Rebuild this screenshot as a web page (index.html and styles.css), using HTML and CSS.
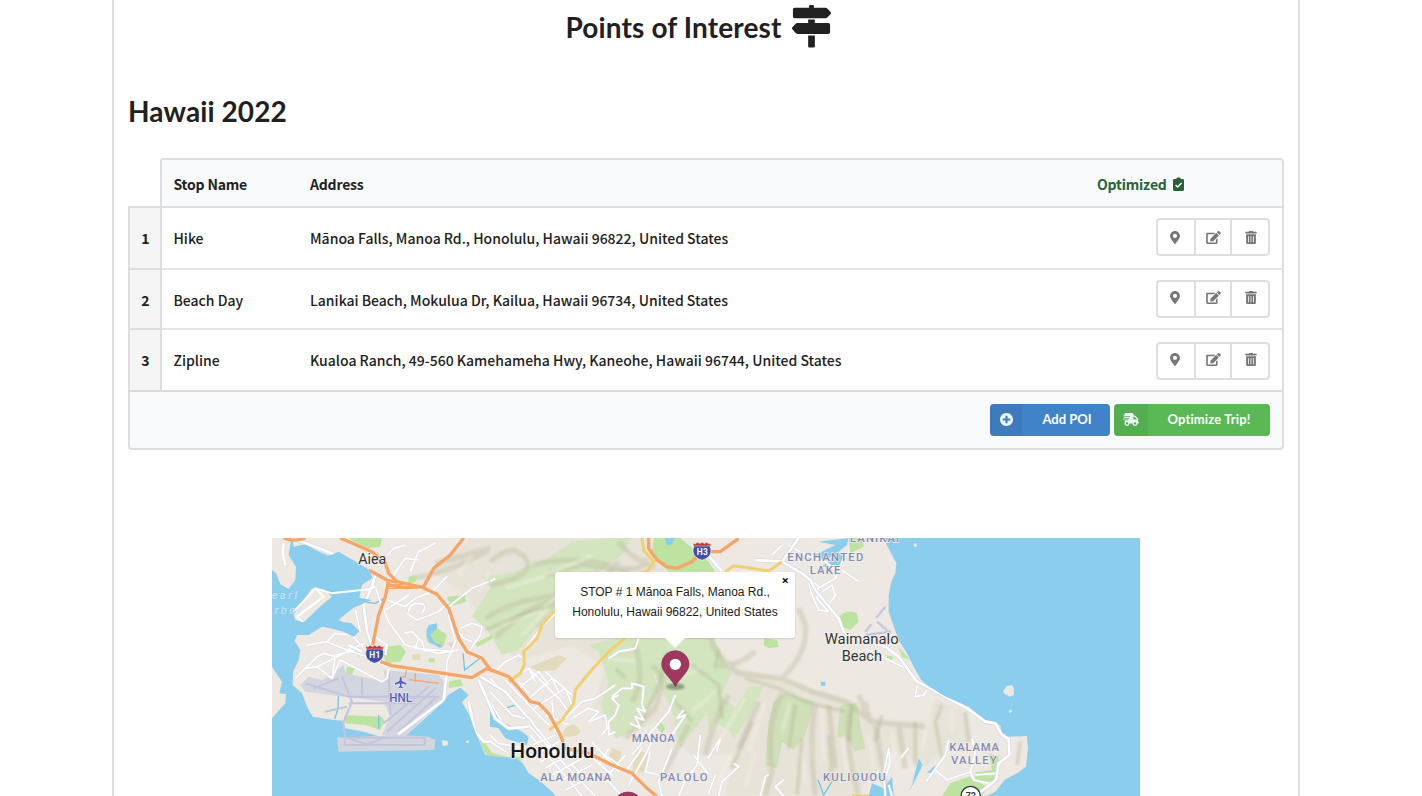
FILE: index.html
```
<!DOCTYPE html>
<html lang="en">
<head>
<meta charset="utf-8">
<title>Points of Interest</title>
<link rel="stylesheet" href="styles.css">
</head>
<body>
<svg class="defs" width="0" height="0" aria-hidden="true">
  <symbol id="pin" viewBox="0 0 384 512"><path d="M172.268 501.67C26.97 291.031 0 269.413 0 192 0 85.961 85.961 0 192 0s192 85.961 192 192c0 77.413-26.97 99.031-172.268 309.67-9.535 13.774-29.93 13.773-39.464 0zM192 272c44.183 0 80-35.817 80-80s-35.817-80-80-80-80 35.817-80 80 35.817 80 80 80z"/></symbol>
  <symbol id="edit" viewBox="0 0 576 512"><path d="M402.6 83.2l90.2 90.2c3.8 3.8 3.8 10 0 13.8L274.4 405.6l-92.8 10.3c-12.4 1.4-22.9-9.1-21.5-21.5l10.3-92.8L388.8 83.2c3.8-3.8 10-3.8 13.8 0zm162-22.9l-48.8-48.8c-15.2-15.2-39.9-15.2-55.2 0l-35.4 35.4c-3.8 3.8-3.8 10 0 13.8l90.2 90.2c3.8 3.8 10 3.8 13.8 0l35.4-35.4c15.2-15.3 15.2-40 0-55.2zM384 346.2V448H64V128h229.8c3.2 0 6.2-1.3 8.5-3.5l40-40c7.6-7.6 2.2-20.5-8.5-20.5H48C21.5 64 0 85.5 0 112v352c0 26.5 21.5 48 48 48h352c26.5 0 48-21.5 48-48V306.2c0-10.7-12.9-16-20.5-8.5l-40 40c-2.2 2.3-3.5 5.3-3.5 8.5z"/></symbol>
  <symbol id="trash" viewBox="0 0 448 512"><path d="M32 464a48 48 0 0 0 48 48h288a48 48 0 0 0 48-48V128H32zm272-256a16 16 0 0 1 32 0v224a16 16 0 0 1-32 0zm-96 0a16 16 0 0 1 32 0v224a16 16 0 0 1-32 0zm-96 0a16 16 0 0 1 32 0v224a16 16 0 0 1-32 0zM432 32H312l-9.4-18.7A24 24 0 0 0 281.1 0H166.8a23.72 23.72 0 0 0-21.4 13.3L136 32H16A16 16 0 0 0 0 48v32a16 16 0 0 0 16 16h416a16 16 0 0 0 16-16V48a16 16 0 0 0-16-16z"/></symbol>
</svg>
<main class="panel">
  <h1 class="title"><span>Points of Interest</span>
    <svg class="title-icon" viewBox="0 0 512 512" preserveAspectRatio="none"><path d="M507.31 84.69L464 41.37c-6-6-14.14-9.37-22.63-9.37H288V16c0-8.84-7.16-16-16-16h-32c-8.84 0-16 7.16-16 16v16H36c-13.25 0-24 10.75-24 24v80c0 13.25 10.75 24 24 24h405.37c8.49 0 16.62-3.37 22.63-9.37l43.31-43.31c6.25-6.26 6.25-16.38 0-22.63zM212 496c0 8.84 7.16 16 16 16h56c8.84 0 16-7.16 16-16V368h-88v128zm264-280H300v-40h-88v40H70.63c-8.49 0-16.62 3.37-22.63 9.37L4.69 268.69c-6.25 6.25-6.25 16.38 0 22.63L48 338.63c6 6 14.14 9.37 22.63 9.37H476c13.25 0 24-10.75 24-24v-84c0-13.25-10.75-24-24-24z"/></svg>
  </h1>
  <h2 class="trip">Hawaii 2022</h2>
  <table class="stops">
    <colgroup><col class="c-num"><col class="c-name"><col><col class="c-act"></colgroup>
    <thead>
      <tr><th class="corner"></th><th>Stop Name</th><th>Address</th>
        <th class="optimized"><span class="opt">Optimized <svg class="clip" viewBox="0 0 12 15"><path d="M1.5 2H3.7V1.2Q3.7.8 4.2.8H5Q6-.4 7 .8h.8q.5 0 .5.4V2h2.2Q12 2 12 3.3v10Q12 15 10.6 15H1.4Q0 15 0 13.4v-10Q0 2 1.5 2z"/><path class="tick" d="M2.8 8.5l2.3 2.3 4.2-4.3"/></svg></span></th></tr>
    </thead>
    <tbody>
      <tr class="tall"><th class="num">1</th><td>Hike</td><td>Mānoa Falls, Manoa Rd., Honolulu, Hawaii 96822, United States</td>
        <td class="act"><div class="group"><button><svg class="i-pin"><use href="#pin"/></svg></button><button><svg class="i-edit"><use href="#edit"/></svg></button><button><svg class="i-trash"><use href="#trash"/></svg></button></div></td></tr>
      <tr class="short"><th class="num">2</th><td>Beach Day</td><td>Lanikai Beach, Mokulua Dr, Kailua, Hawaii 96734, United States</td>
        <td class="act"><div class="group raised"><button><svg class="i-pin"><use href="#pin"/></svg></button><button><svg class="i-edit"><use href="#edit"/></svg></button><button><svg class="i-trash"><use href="#trash"/></svg></button></div></td></tr>
      <tr class="tall last"><th class="num">3</th><td>Zipline</td><td>Kualoa Ranch, 49-560 Kamehameha Hwy, Kaneohe, Hawaii 96744, United States</td>
        <td class="act"><div class="group raised"><button><svg class="i-pin"><use href="#pin"/></svg></button><button><svg class="i-edit"><use href="#edit"/></svg></button><button><svg class="i-trash"><use href="#trash"/></svg></button></div></td></tr>
    </tbody>
    <tfoot>
      <tr><td colspan="4"><div class="actions">
        <button class="btn add"><span class="side"><svg width="13" height="13" viewBox="8 8 496 496"><path d="M256 8C119 8 8 119 8 256s111 248 248 248 248-111 248-248S393 8 256 8zm144 276c0 6.6-5.4 12-12 12h-92v92c0 6.6-5.4 12-12 12h-56c-6.6 0-12-5.4-12-12v-92h-92c-6.6 0-12-5.4-12-12v-56c0-6.6 5.4-12 12-12h92v-92c0-6.6 5.4-12 12-12h56c6.6 0 12 5.4 12 12v92h92c6.6 0 12 5.4 12 12v56z"/></svg></span><span class="lbl">Add POI</span></button>
        <button class="btn go"><span class="side"><svg width="16" height="13" viewBox="0 0 640 512"><path d="M624 352h-16V243.9c0-12.7-5.1-24.9-14.1-33.9L494 110.1c-9-9-21.2-14.1-33.9-14.1H416V48c0-26.5-21.5-48-48-48H112C85.5 0 64 21.5 64 48v48H8c-4.4 0-8 3.6-8 8v16c0 4.4 3.6 8 8 8h272c4.4 0 8 3.6 8 8v16c0 4.4-3.6 8-8 8H40c-4.4 0-8 3.6-8 8v16c0 4.4 3.6 8 8 8h208c4.4 0 8 3.6 8 8v16c0 4.4-3.6 8-8 8H8c-4.4 0-8 3.6-8 8v16c0 4.4 3.6 8 8 8h208c4.4 0 8 3.6 8 8v16c0 4.4-3.6 8-8 8H64v128c0 53 43 96 96 96s96-43 96-96h128c0 53 43 96 96 96s96-43 96-96h48c8.8 0 16-7.2 16-16v-32c0-8.8-7.2-16-16-16zM160 464c-26.5 0-48-21.5-48-48s21.5-48 48-48 48 21.5 48 48-21.5 48-48 48zm320 0c-26.5 0-48-21.5-48-48s21.5-48 48-48 48 21.5 48 48-21.5 48-48 48zm80-208H416V144h44.1l99.9 99.9V256z"/></svg></span><span class="lbl">Optimize Trip!</span></button>
      </div></td></tr>
    </tfoot>
  </table>

  <section class="map">
    <svg class="tiles" viewBox="0 9 2604 774">
      <defs>
        <clipPath id="island"><path d="M60 0L65 35 100 28 130 45 170 62 200 50 290 103 302 128 270 150 262 188 300 195 245 218 205 250 235 262 262 288 245 306 215 290 175 280 150 275 110 300 75 300 68 318 85 345 80 375 63 410 62 450 90 475 105 515 122 545 185 555 212 557 220 580 275 590 325 605 400 603 515 500 528 480 565 458 590 480 570 502 592 540 610 590 640 660 684 665 730 668 752 685 770 715 800 735 845 775 860 800H2112L2170 770 2200 733 2240 712 2262 695 2268 640 2265 603 2207 605 2188 590 2185 572 2170 560 2140 555 2090 515 2020 485 1968 453 1948 435 1925 395 1905 355 1880 315 1862 265 1850 230 1850 180 1858 140 1870 115 1873 85 1855 50 1830 0Z"/></clipPath>
        <filter id="soft" x="-5%" y="-5%" width="110%" height="110%"><feGaussianBlur stdDeviation="3.5"/></filter>
        <g id="streets">
          <path d="M105 330L165 320 190 295 240 300 275 340M165 320L225 345 280 325M70 430L135 365 155 355 190 365 180 430 135 395 100 400M135 395L225 350M190 360L250 345M180 430L205 375 330 440 345 430 350 400M225 345L285 365 345 395M310 155L325 200 350 260 400 330 500 355 560 345M345 195L400 215 430 190 480 170 525 125M340 225L410 180M350 140L400 70 440 75M415 110L440 50 490 25M405 235L435 255 500 230 530 200M410 230Q410 205 440 205T450 235M395 295L420 290 440 310 430 340 545 350M430 300L450 320 460 350M520 500L525 380 550 320 530 240M565 280L600 265 630 275 625 300 590 350M250 225L265 290M300 300L345 330 340 360M560 290L575 310 600 320M345 60L365 40 400 30M530 215L600 160 650 140"/>
          <path d="M654 430L760 530 800 590M654 470L720 540 760 550M654 500L690 560M710 440L770 400 790 440M735 465L800 410 830 450M760 500L840 430 860 470M785 520L880 460 900 510M700 435L770 510 830 570M770 400L860 490 890 530M820 410L900 480M740 440L770 475M760 340L810 275 850 235M654 140L670 130M820 540L890 570M840 500L850 590M670 410L700 380 740 360 760 375"/>
          <path d="M770 570L880 690 970 783M775 600L860 700 930 783M795 580L850 650 910 670M780 630L850 600M790 660L870 615M805 680L880 640M820 700L920 640M840 720L940 665M860 740L960 690M880 765L990 710M900 690L930 720 1010 740 1050 783M940 650L1020 720M960 620L1040 710M1000 660L1080 720M1010 640L980 690M1060 660L1000 730M1110 640L1060 710M1120 660L1070 750M1140 620L1110 680M654 600L680 625 760 640M654 620L700 650"/>
          <path d="M880 550L930 500 970 490 1030 450M900 550L950 520 980 530 950 560 1000 540 1005 580 990 600M1040 480L1020 490 1040 510 1030 540 1010 560 1010 600 1030 590M1020 485L1050 460 1080 460 1080 445 1115 455 1110 510 1120 530 1095 520 1115 555 1090 545 1105 580 1075 565M1210 480L1190 530 1130 600 1080 660M1235 525L1215 550 1240 540 1200 600 1175 610M1135 650L1120 710 1160 720M1200 640L1160 740 1170 783M1285 600L1275 690 1240 735 1220 783M1308 670L1345 610 1335 650M1265 660L1310 720M1290 720L1308 730M1340 783L1350 740 1400 695 1385 685M1465 783L1480 725 1490 718M1535 783L1510 755 1535 735M1010 370L1040 350 1090 340 1100 310"/>
          <path d="M1610 130L1640 155 1635 190 1670 230 1640 225 1620 180 1610 145M1650 170L1680 150 1690 180 1670 210M1550 30L1600 60 1660 80 1700 115M1630 165L1690 130 1720 60M1710 105L1760 140M1530 30L1500 60M1780 340L1900 400 1890 370M1780 360L1760 345M1885 670L1910 640"/>
          <path d="M1962 740L2020 660 2030 615M1990 705L2025 735 2095 710 2110 655 2100 610M2095 710L2105 735 2150 745M1840 783L1835 720 1850 640 1855 680 1838 735M1935 455L1930 485 1955 480 1965 465M2110 720L2170 715M1330 720L1310 775M1860 783L1850 750"/>
        </g>
        <path id="highways" d="M60 9L155 45 290 105M310 120L300 155 275 210 285 290 300 330M180 175L290 163 310 155M230 330L270 350M378 598L515 495 525 410M1580 9L1555 45 1530 80 1590 115 1615 135 1630 165 1700 250 1715 290M1530 80L1450 75M1308 60L1350 110M620 435L670 550 710 580 770 575M625 425L700 470 770 550M1715 290L1745 310 1840 335 1880 365 1935 440 1965 455 2085 520 2140 560 2170 565 2190 600 2210 612 2212 660 2180 685 2172 735 2110 783M590 500L610 590 635 620 660 620"/>
      </defs>
      <rect class="sea" y="0" width="2604" height="800"/>
      <path class="land" d="M0 0H60L50 60 72 95 70 135 50 162 25 148 12 115 0 105ZM0 395L30 440 22 475 42 478 40 505 0 550ZM65 240L120 160 155 162 180 185 150 210 95 262 70 255ZM200 255L235 232 250 240 245 265 215 262ZM510 615L527 618 528 630 512 634ZM582 618L590 616V624H583Z"/>
      <g clip-path="url(#island)">
        <rect class="land" y="0" width="2604" height="800"/>
        <path class="upland" filter="url(#soft)" d="M590 9H1130L1190 110 1300 120 1330 330 1400 400 1560 440 1750 500 1830 560 1960 560 1990 490 2090 540 2100 620 2020 640 1960 700 1870 640 1750 783H1360L1380 660 1260 660 1150 560 1040 610 960 520 1000 400 900 330 740 380 660 300 590 190 480 110Z"/>
        <!-- forest reserves -->
        <g class="forest">
          <path d="M820 75L900 20 1010 9H1080L1050 60 970 120 860 195 800 270 740 345 690 360 655 300 640 280 600 245 655 160 630 125 715 115 760 95Z"/>
          <path d="M950 330L1040 310H1180L1320 300 1375 410 1350 480 1390 600 1300 540 1225 640 1200 530 1140 400 1160 470 1080 590 1030 610 985 510 1010 440 980 350Z"/>
          <path d="M1308 385L1380 415 1345 480 1390 520 1430 455 1475 455 1420 560 1385 610 1340 530 1308 600Z"/>
          <path class="deep" d="M1505 500L1540 475 1628 500 1600 600 1565 645 1530 620 1515 700 1480 690 1490 560ZM1705 510L1755 505 1765 570 1780 640 1750 650 1720 600 1695 610Z"/>
        </g>
        <!-- ridges -->
        <g class="shade" filter="url(#soft)">
          <path d="M655 80Q720 20 760 70T655 150M780 90Q900 60 1010 90T1120 70M640 250Q720 200 800 190T980 110M670 310Q760 210 860 195T1040 80M800 280Q860 200 930 170L1000 120M1040 20Q1080 75 1150 95M420 130Q540 110 650 45M490 85L655 40"/>
          <path d="M1140 390L1175 430 1150 520 1060 610M1320 270Q1300 350 1400 415L1530 430 1620 470 1720 500 1800 560 1960 575M1530 430Q1610 350 1600 270L1580 220M1370 480Q1330 540 1300 660M1460 500L1400 640M1530 475Q1480 570 1500 710L1480 780M1630 510Q1610 600 1630 780M1670 510L1690 700M1740 510Q1710 610 1760 780M1760 480L1790 550 1780 500M1810 570L1840 750M1880 570L1900 700M1450 350Q1390 400 1340 390M1250 570L1170 730M1090 330Q1120 440 1080 500"/>
        </g>
        <g class="light" filter="url(#soft)"><path d="M700 160L830 120 960 60M690 270L800 230 900 150M750 300L830 220M1010 370L1090 380M1190 350L1230 420 1290 400M1330 470L1260 530M1420 490L1340 620M1480 500L1430 650M1555 500L1530 590M1650 520L1655 680M1710 610L1730 730M1790 600L1805 700M1860 590L1870 690M1380 650L1340 740M1450 650L1420 760M1590 650L1600 750M600 60L560 120M2040 520L2040 600M1975 520L1950 650M650 110L620 170"/></g>
        <g class="ridge" filter="url(#soft)">
          <path d="M640 285L770 230 850 210M820 125L930 90 1070 110M1260 390L1340 450 1350 550M1420 430L1520 460 1600 500 1720 530M1570 510L1550 640M1590 610L1575 780M1740 510L1730 620M2010 510L1990 560 2010 670M2080 530L2090 620M1670 600L1680 740M1930 560L1930 690M1185 350L1160 450 1110 560M1830 540L1810 620M1440 560L1380 700M2245 620L2235 690M1030 400L1060 430M1210 500L1260 560M1340 340L1330 400"/>
        </g>
        <g class="park">
          <path d="M230 9H330L325 35 290 40 250 22ZM345 335L385 330 402 350 385 380 340 385 335 355ZM218 540L330 545 338 560 325 585 280 570 218 565ZM225 395L248 400 238 425 222 415ZM525 185L580 180 582 200 530 215ZM460 300L490 275 525 300 515 330 470 325ZM410 125L435 120 430 142 408 145ZM530 440L565 432 573 452 530 460ZM605 585L625 600 660 655V675L640 655ZM470 370H488V382H470ZM610 325L660 300V312L615 337Z"/>
          <path d="M1145 9H1225L1310 80 1330 110H1190L1140 60ZM1700 245Q1725 220 1755 235L1760 260 1735 285 1710 275ZM1476 310L1515 315 1520 335 1490 340 1475 330ZM1730 9H1770L1775 35 1735 55ZM1840 360L1865 365 1855 380ZM1878 335L1915 375 1890 365ZM1150 570L1165 560 1180 580 1170 595ZM2110 712L2160 705 2150 655 2180 665 2178 740 2110 740ZM2010 783L2035 745 2090 725 2145 755 2130 783ZM654 652L705 665 750 665 745 690 710 690 654 665Z"/>
        </g>
        <g class="sand">
          <path d="M420 360L445 355V375H422ZM775 395L860 360 885 370 850 405 800 410ZM885 575Q905 560 920 580T895 605 885 575ZM1020 640L1050 650 1035 695 1000 690ZM1090 640L1135 660 1120 710 1080 715ZM250 355L270 350 260 370ZM525 325L545 320 540 340Z"/>
        </g>
        <path class="lake" d="M462 290L470 270 495 265 495 280 475 300 490 325 515 330 505 340 470 320ZM654 530L675 535 690 560 750 590 770 605 765 630 700 610 680 580 654 575ZM1178 9H1208L1200 28 1185 32ZM1645 440H1660V452H1648ZM1730 9L1725 30 1700 50 1715 70 1700 95 1650 95 1690 60 1640 80 1630 60 1690 30 1640 20ZM1790 783L1800 745 1835 760 1860 725 1865 783ZM1920 750L1940 670 1952 690 1925 745 1900 783ZM1964 715L1990 690 1985 710Z"/>
        <g class="streams"><path d="M262 188L210 186 175 200M270 200L310 205 345 185M200 465L198 520 188 552M320 540V580M573 355L578 405 630 365M480 435L520 450M1638 735L1655 780 1680 740M730 510L700 520"/></g>
        <g class="airport">
          <path d="M85 450L110 425 150 435 215 390 220 415 340 440 335 405 500 420 515 440 515 490 400 603 330 600 355 545 335 500 100 470Z"/>
        </g>
        <g class="runway"><path d="M100 445L230 485H500M210 425L240 500 215 560M345 590L490 460M335 565L470 455M160 530L225 515M350 410L355 540M125 460L200 430M230 505H430M270 430V480M380 590L490 490"/></g>
        <!-- roads: casing below, surface above -->
        <use href="#streets" class="street-case"/>
        <use href="#streets" class="street"/>
        <use href="#highways" class="road-case"/>
        <use href="#highways" class="road"/>
        <path class="yellow" d="M1110 9L1115 45 1145 80 1130 105 1090 120M855 220L810 270 795 310 755 350 757 390 745 415 710 440M1060 310L1015 345 950 415 910 465 905 505 870 555 832 585M1360 110L1385 92 1440 100 1490 108 1530 80M1740 783H1790"/>
        <path class="orange" d="M205 9L300 50 340 85 350 115 375 140 450 157 495 178 530 220 545 265 560 310 585 350 630 370 660 410M575 9L535 60 485 100 455 155 400 158 350 150M290 105L345 135 375 142M350 140L340 185 320 240 302 330M325 380L360 392 600 428 645 400 710 425 745 465 775 500 800 505 830 535 865 600 880 640 950 655 1020 690 1080 715 1120 755 1155 785M1130 9V40L1155 75 1185 95 1215 100 1260 80 1290 50M1308 50H1345L1400 10"/>
        <path class="ramp" d="M345 140V160H410M370 150L415 145M403 405L400 425 385 427M430 415V440M412 434L500 445"/>
      </g>
      <path class="orange" d="M35 9Q65 22 100 9"/>
      <path class="white-road" d="M35 25L32 55 40 90M65 230L130 160 155 185 75 245 92 260M130 160L180 175 290 163"/>
      <path class="airport" d="M195 608L340 602 345 590 385 600 470 605 490 615 487 645 200 650Z"/>
      <path class="runway" d="M218 610V630H458V608H225L285 628 345 605M213 557L220 610"/>
      <path class="island" d="M2193 468L2205 453 2220 450 2226 460 2225 480 2213 485 2196 475ZM2210 527L2220 524 2220 530 2212 534ZM1925 27L1932 25 1935 34 1927 36Z"/>
      <path class="strip" d="M1813 248L1840 216M1780 290L1798 268M1780 300L1858 290M1815 260L1850 290"/>
      <g class="plane" transform="translate(386 443)"><path d="M-3-14Q0-20 3-14V-6L17 2V6L3 2 2 11 7 15V17L0 15-7 17V15L-2 11-3 2-17 6V2L-3-6Z"/></g>
      <g class="shield" transform="translate(308 357)"><path class="blue" d="M-24-16H24Q31 3 22 15 14 24 0 28-14 24-22 15-31 3-24-16Z"/><path class="red" d="M-25-15L-27-23-20-21-14-26-7-22 0-26 7-22 14-26 20-21 27-23 25-15Z"/><text x="-16" y="13" textLength="33">H1</text></g>
      <g class="shield" transform="translate(1290 48)"><path class="blue" d="M-24-16H24Q31 3 22 15 14 24 0 28-14 24-22 15-31 3-24-16Z"/><path class="red" d="M-25-15L-27-23-20-21-14-26-7-22 0-26 7-22 14-26 20-21 27-23 25-15Z"/><text x="-16" y="13" textLength="33">H3</text></g>
      <circle class="route" cx="2096" cy="783" r="29"/><text class="route-no" x="2081" y="791" textLength="31">72</text>
      <g class="town">
        <text x="259" y="86" textLength="84" lengthAdjust="spacingAndGlyphs">Aiea</text>
        <text x="1658" y="326" textLength="222" lengthAdjust="spacingAndGlyphs">Waimanalo</text>
        <text x="1709" y="377" textLength="121" lengthAdjust="spacingAndGlyphs">Beach</text>
      </g>
      <text class="city" x="715" y="668" textLength="252" lengthAdjust="spacingAndGlyphs">Honolulu</text>
      <text class="hnl" x="352" y="502" textLength="68" lengthAdjust="spacingAndGlyphs">HNL</text>
      <g class="district">
        <text x="1079" y="620" textLength="129">MANOA</text>
        <text x="805" y="739" textLength="212">ALA MOANA</text>
        <text x="1164" y="739" textLength="143">PALOLO</text>
        <text x="1546" y="79" textLength="228">ENCHANTED</text>
        <text x="1613" y="118" textLength="92">LAKE</text>
        <text x="1734" y="20" textLength="148">LANIKAI</text>
        <text x="1653" y="737" textLength="188">KULIOUOU</text>
        <text x="2032" y="647" textLength="149">KALAMA</text>
        <text x="2037" y="686" textLength="137">VALLEY</text>
      </g>
      <g class="harbor"><text x="-1" y="191" textLength="76">earl</text><text x="8" y="236" textLength="80">rbor</text></g>
      <g class="marker" transform="translate(1068 771)"><path d="M0 102C-10 80-41 62-41 37A41 37 0 0 1 41 37C41 62 10 80 0 102Z"/></g>
      <ellipse class="drop" cx="1210" cy="455" rx="28" ry="10" filter="url(#soft)"/>
      <g class="marker" transform="translate(1210 347)"><path d="M0 108C-10 85-41 65-41 41A41 41 0 0 1 41 41C41 65 10 85 0 108Z"/><circle cy="41" r="17"/></g>
    </svg>
    <div class="popup"><span class="close">×</span><p>STOP # 1 Mānoa Falls, Manoa Rd.,<br>Honolulu, Hawaii 96822, United States</p></div>
  </section>
</main>
</body>
</html>
```
FILE: styles.css
```
* { box-sizing: border-box; }
html, body { margin: 0; height: 796px; overflow: hidden; background: #fff; }
body { color: #212121; font-family: "Noto Sans CJK SC", "Noto Sans", sans-serif; }
.defs { display: block; height: 0; }
button { font: inherit; padding: 0; margin: 0; border: 0; background: none; }

.panel { width: 1188px; height: 830px; margin-left: 112px; padding: 0 14px; border: solid #dededf; border-width: 0 2px; }
.title { display: flex; justify-content: center; align-items: flex-start; gap: 11px; height: 95px; margin: 0; padding: 5px 15px 0 0; font: 700 28px/44px Lato, sans-serif; letter-spacing: .12px; }
.title-icon { width: 39px; height: 42.5px; fill: #212121; }
.trip { height: 63px; margin: 0; font: 700 28px/32px Lato, sans-serif; letter-spacing: .1px; }

.stops { width: 1156px; table-layout: fixed; border-collapse: separate; border-spacing: 0; font-size: 14px; line-height: 20px; }
.c-num { width: 34px; }
.c-name { width: 136px; }
.c-act { width: 199px; }
.stops th, .stops td { padding: 0 0 0 12px; text-align: left; vertical-align: middle; }
.stops td { font-weight: 500; border-bottom: 2px solid #e3e4e5; }
.stops td:nth-child(2), .stops th:nth-child(2) { padding-left: 11.5px; }
.stops thead th { height: 50px; padding-top: 1px; background: #f9fafb; border: solid #dededf; border-width: 2px 0; font-weight: 700; letter-spacing: -.2px; }
.stops thead .corner { background: #fff; border-top-color: #fff; border-right: 2px solid #dededf; }
.stops thead .optimized { border-right-width: 2px; border-top-right-radius: 4px; color: #276336; }
.opt { display: flex; align-items: center; gap: 6px; }
.clip { width: 11px; height: 14px; fill: #276336; }
.tick { fill: none; stroke: #fff; stroke-width: 1.6; }
.stops .num { padding: 0 0 0 1px; text-align: center; font-weight: 700; background: #f5f5f5; border: solid #dededf; border-width: 0 2px 2px; }
.tall > * { height: 62px; }
.short > * { height: 60px; }
.stops .short .num, .stops .short td:not(.act) { padding-top: 2px; }
.stops .act { padding: 0 12px 0 0; border-right: 2px solid #dededf; vertical-align: top; }
.stops .last > * { border-bottom-color: #d9dadc; }
.group { display: flex; width: 114px; height: 38px; margin: 10px 0 0 auto; border: 2px solid #dededf; border-radius: 4px; background: #fff; }
.last .group { margin-top: 12px; }
.group button { display: flex; width: 36px; align-items: center; justify-content: center; border-right: 2px solid #dededf; }
.group button:first-child { width: 38px; padding-right: 2px; }
.group button:last-child { padding-left: 1px; border: 0; }
.raised button { padding-bottom: 4px; }
.group svg { height: 13px; fill: #767676; }
.i-pin { width: 10px; }
.i-edit { width: 15px; }
.i-trash { width: 12px; }
.stops tfoot td { height: 58px; padding: 12px 12px 0 0; vertical-align: top; background: #f9fafb; border: 2px solid #dededf; border-top: 0; border-radius: 0 0 4px 4px; }
.actions { display: flex; justify-content: flex-end; gap: 4px; }
.btn { display: flex; height: 32px; border-radius: 4px; overflow: hidden; color: #fff; font: 700 13px/31px Lato, sans-serif; }
.add { width: 120px; background: #4183c9; }
.go { width: 156px; background: #5ab955; letter-spacing: .12px; }
.side { display: flex; align-items: center; justify-content: center; width: 32px; height: 32px; padding-bottom: 2px; background: rgba(0,0,0,.06); }
.go .side { width: 34px; }
.side svg { fill: #edf4f5; }
.lbl { flex: 1; text-align: center; padding-left: 2px; white-space: nowrap; }
.go .lbl { padding-left: 0; }

.map { position: relative; width: 868px; height: 258px; margin: 88px 0 0 144px; overflow: hidden; }
.tiles { display: block; width: 868px; height: 258px; }
.sea { fill: #8bcdec; }
.land, .island { fill: #ede8e2; }
.upland { fill: #e7e3d8; }
.forest { fill: #d3e5bf; }
.forest .deep { fill: #c9dfb0; opacity: .8; }
.shade { fill: none; stroke: #bbb89c; stroke-width: 16; opacity: .36; stroke-linejoin: round; }
.light { fill: none; stroke: #f3f1e6; stroke-width: 13; opacity: .4; }
.ridge { fill: none; stroke: #a8aa86; stroke-width: 11; opacity: .3; stroke-linejoin: round; }
.park { fill: #bce3a0; }
.sand { fill: #e2dcbc; }
.lake { fill: #8bcdec; }
.streams { fill: none; stroke: #77c2ea; stroke-width: 4; }
.airport { fill: #d3d6df; }
.runway { fill: none; stroke: #c3c6da; stroke-width: 6; }
.strip { fill: none; stroke: #c3c8de; stroke-width: 7; }
.street-case, .street, .road-case, .road { fill: none; stroke-linejoin: round; }
.street-case { stroke: #dddde6; stroke-width: 8; }
.street { stroke: #fff; stroke-width: 5; }
.road-case { stroke: #d5d6e6; stroke-width: 12; }
.road { stroke: #fff; stroke-width: 8; }
.white-road { fill: none; stroke: #fff; stroke-width: 6; }
.yellow { fill: none; stroke: #f0d071; stroke-width: 9; stroke-linejoin: round; }
.orange { fill: none; stroke: #f5a567; stroke-width: 10; stroke-linejoin: round; }
.ramp { fill: none; stroke: #f5a567; stroke-width: 4; }
.plane { fill: #4d5fc9; stroke: #eceef8; stroke-width: 3; paint-order: stroke; }
.blue { fill: #4150a3; stroke: #fff; stroke-width: 2; }
.red { fill: #c33a36; stroke: #fff; stroke-width: 1; }
.shield text { fill: #fff; font: 700 25px Roboto, sans-serif; }
.route { fill: #fff; stroke: #333; stroke-width: 4; }
.route-no { font: 700 27px Roboto, sans-serif; fill: #333; }
.town { font: 400 42px Roboto, sans-serif; fill: #333; stroke: #f5f2ef; stroke-width: 4; paint-order: stroke; }
.city { font: 500 62px Roboto, sans-serif; fill: #161616; stroke: #f5f2ef; stroke-width: 5; paint-order: stroke; }
.hnl { font: 500 36px Roboto, sans-serif; fill: #555fb8; stroke: #eceef5; stroke-width: 3; paint-order: stroke; }
.district { font: 500 34px Roboto, sans-serif; fill: #858cb2; stroke: #f2efec; stroke-width: 4; paint-order: stroke; }
.harbor { font: italic 400 33px Roboto, sans-serif; fill: #c3e7f8; }
.marker path { fill: #a0375f; stroke: #842c4f; stroke-width: 2; }
.marker circle { fill: #fff; }
.drop { fill: #4e5a46; opacity: .5; }
.popup { position: absolute; left: 283px; top: 34px; width: 240px; height: 66px; padding: 10px 10px 0; background: #fff; border-radius: 3px; box-shadow: 0 1px 2px rgba(0,0,0,.12); text-align: center; font: 12px/20px "Liberation Sans", Arial, sans-serif; }
.popup::after { content: ""; position: absolute; left: 110px; top: 66px; border: 10px solid transparent; border-top-color: #fff; border-bottom: 0; }
.popup p { margin: 0; white-space: nowrap; }
.close { position: absolute; right: 6px; top: 2px; font: 700 13px/12px "Noto Sans", sans-serif; color: #111; }
```
